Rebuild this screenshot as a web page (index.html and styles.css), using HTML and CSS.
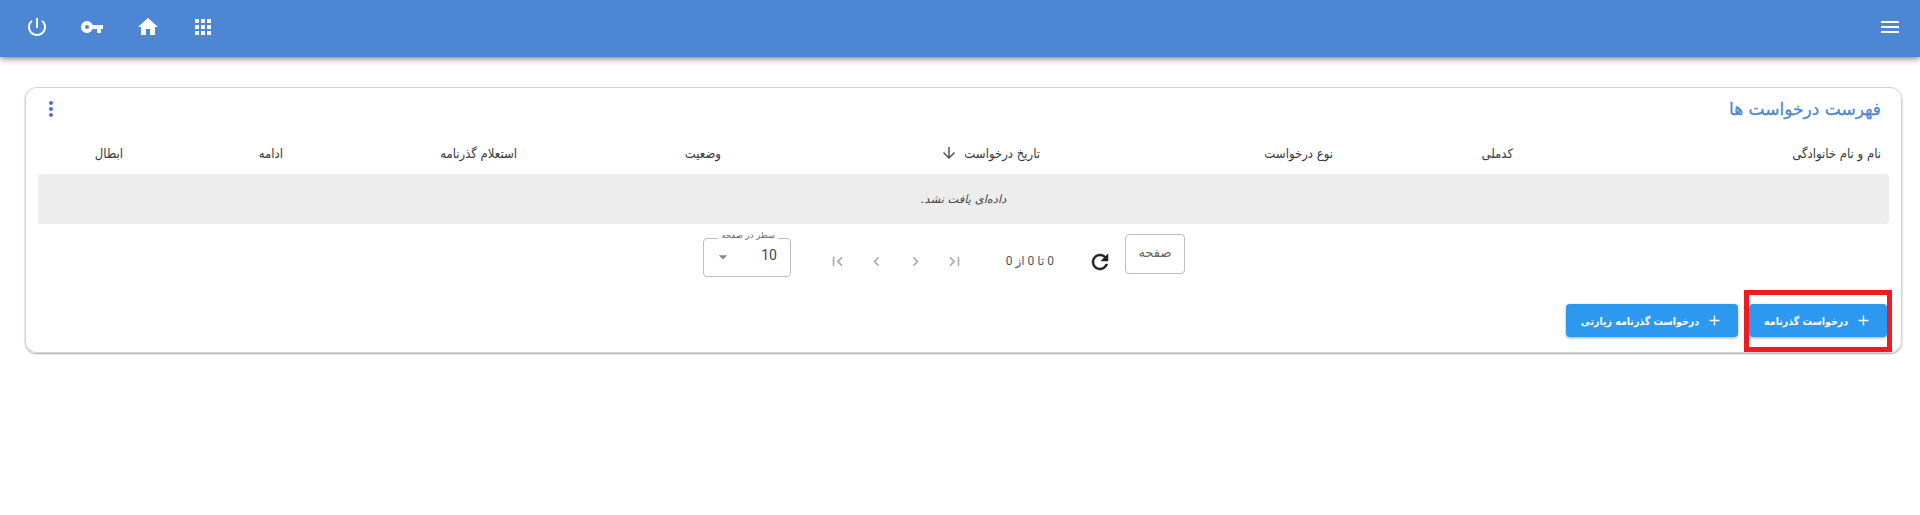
FILE: index.html
```html
<!DOCTYPE html>
<html lang="fa" dir="rtl">
<head>
<meta charset="utf-8">
<title>فهرست درخواست ها</title>
<link rel="stylesheet" href="styles.css">
</head>
<body>
<header class="topbar">
  <button class="icon-btn menu-btn"><svg viewBox="0 0 24 24" class="icon"><path d="M3 18h18v-2H3v2zm0-5h18v-2H3v2zm0-7v2h18V6H3z"/></svg></button>
  <nav class="top-actions">
    <button class="icon-btn"><svg viewBox="0 0 24 24" class="icon"><path d="M4 8h4V4H4v4zm6 12h4v-4h-4v4zm-6 0h4v-4H4v4zm0-6h4v-4H4v4zm6 0h4v-4h-4v4zm6-10v4h4V4h-4zm-6 4h4V4h-4v4zm6 6h4v-4h-4v4zm0 6h4v-4h-4v4z"/></svg></button>
    <button class="icon-btn"><svg viewBox="0 0 24 24" class="icon"><path d="M10 20v-6h4v6h5v-8h3L12 3 2 12h3v8z"/></svg></button>
    <button class="icon-btn"><svg viewBox="0 0 24 24" class="icon"><path d="M12.65 10C11.83 7.67 9.61 6 7 6c-3.31 0-6 2.69-6 6s2.69 6 6 6c2.61 0 4.83-1.67 5.65-4H17v4h4v-4h2v-4H12.65zM7 14c-1.1 0-2-.9-2-2s.9-2 2-2 2 .9 2 2-.9 2-2 2z"/></svg></button>
    <button class="icon-btn"><svg viewBox="0 0 24 24" class="icon"><path d="M13 3h-2v10h2V3zm4.83 2.17l-1.42 1.42C17.99 7.86 19 9.81 19 12c0 3.87-3.13 7-7 7s-7-3.13-7-7c0-2.19 1.01-4.14 2.58-5.42L6.17 5.17C4.23 6.82 3 9.26 3 12c0 4.97 4.03 9 9 9s9-4.03 9-9c0-2.74-1.23-5.18-3.17-6.83z"/></svg></button>
  </nav>
</header>

<main class="page">
  <section class="card">
    <div class="card-head">
      <h1 class="card-title">فهرست درخواست ها</h1>
      <button class="more-btn"><svg viewBox="0 0 24 24" class="icon"><path d="M12 8c1.1 0 2-.9 2-2s-.9-2-2-2-2 .9-2 2 .9 2 2 2zm0 2c-1.1 0-2 .9-2 2s.9 2 2 2 2-.9 2-2-.9-2-2-2zm0 6c-1.1 0-2 .9-2 2s.9 2 2 2 2-.9 2-2-.9-2-2-2z"/></svg></button>
    </div>

    <div class="table">
      <div class="thead">
        <span>نام و نام خانوادگی</span>
        <span>کدملی</span>
        <span>نوع درخواست</span>
        <span class="sorted">تاریخ درخواست <svg viewBox="0 0 24 24" class="sort-icon"><path d="M20 12l-1.41-1.41L13 16.17V4h-2v12.17l-5.58-5.59L4 12l8 8 8-8z"/></svg></span>
        <span>وضعیت</span>
        <span>استعلام گذرنامه</span>
        <span>ادامه</span>
        <span>ابطال</span>
      </div>
      <div class="empty">داده‌ای یافت نشد.</div>
    </div>

    <div class="pager">
      <button class="page-btn">صفحه</button>
      <svg viewBox="0 0 24 24" class="refresh"><path d="M17.65 6.35C16.2 4.9 14.21 4 12 4c-4.42 0-7.99 3.58-7.99 8s3.57 8 7.99 8c3.73 0 6.84-2.55 7.73-6h-2.08c-.82 2.33-3.04 4-5.65 4-3.31 0-6-2.69-6-6s2.69-6 6-6c1.66 0 3.14.69 4.22 1.78L13 11h7V4l-2.35 2.35z"/></svg>
      <span class="range">0 تا 0 از 0</span>
      <div class="nav-icons">
        <svg viewBox="0 0 24 24" class="nav-icon"><path d="M5.59 7.41L10.18 12l-4.59 4.59L7 18l6-6-6-6zM16 6h2v12h-2z"/></svg>
        <svg viewBox="0 0 24 24" class="nav-icon"><path d="M10 6L8.59 7.41 13.17 12l-4.58 4.59L10 18l6-6z"/></svg>
        <svg viewBox="0 0 24 24" class="nav-icon"><path d="M15.41 7.41L14 6l-6 6 6 6 1.41-1.41L10.83 12z"/></svg>
        <svg viewBox="0 0 24 24" class="nav-icon"><path d="M18.41 16.59L13.82 12l4.59-4.59L17 6l-6 6 6 6zM6 6h2v12H6z"/></svg>
      </div>
      <div class="select">
        <span class="select-label">سطر در صفحه</span>
        <span class="select-value">10</span>
        <svg viewBox="0 0 24 24" class="select-arrow"><path d="M7 10l5 5 5-5z"/></svg>
      </div>
    </div>

    <div class="actions">
      <div class="highlight">
        <button class="primary"><svg viewBox="0 0 24 24" class="plus"><path d="M19 13h-6v6h-2v-6H5v-2h6V5h2v6h6v2z"/></svg>درخواست گذرنامه</button>
      </div>
      <button class="primary"><svg viewBox="0 0 24 24" class="plus"><path d="M19 13h-6v6h-2v-6H5v-2h6V5h2v6h6v2z"/></svg>درخواست گذرنامه زیارتی</button>
    </div>
  </section>
</main>
</body>
</html>
```
FILE: styles.css
```css
* { box-sizing: border-box; }
html, body { margin: 0; height: 100%; background: #fff; overflow: hidden; }
body { font-family: "DejaVu Sans", "Noto Sans", sans-serif; color: rgba(0,0,0,.87); }
button { font: inherit; border: 0; background: none; padding: 0; }

.topbar {
  height: 57px;
  background: #4d87d3;
  display: flex;
  justify-content: space-between;
  align-items: center;
  padding: 0 2px 3px 9px;
  box-shadow: 0 2px 4px -1px rgba(0,0,0,.3), 0 4px 5px rgba(0,0,0,.14), 0 1px 10px rgba(0,0,0,.12);
}
.top-actions { display: flex; }
.icon-btn { width: 55.5px; height: 40px; display: flex; align-items: center; justify-content: center; color: #fff; }
.menu-btn { width: 56px; }
.icon { width: 24px; height: 24px; fill: currentColor; }

.page { padding: 30px 18px 0 25px; }
.card {
  height: 266px;
  border: 1px solid #d4d4d4;
  border-radius: 12px;
  box-shadow: 0 1px 2px rgba(0,0,0,.35);
  padding: 0 12px 0 12px;
}
.card-head { height: 42px; display: flex; justify-content: space-between; align-items: center; padding: 0 8px 0 0; }
.card-title { margin: 0; font-size: 17px; font-weight: 400; color: #4d87d3; -webkit-text-stroke: .3px #4d87d3; }
.more-btn { width: 24px; height: 24px; color: #4d72c9; margin-left: 1px; }

.thead {
  height: 44px;
  display: grid;
  grid-template-columns: 368px 180px 293px 319px 204px 234px 160px 93px;
  align-items: center;
  padding: 2px 8px 0 0;
  font-family: "DejaVu Sans Condensed", "DejaVu Sans", sans-serif;
  font-size: 13px;
  font-weight: 400;
  color: #3a3a3a;
}
.sorted { display: flex; align-items: center; gap: 6px; }
.sort-icon { width: 18px; height: 18px; fill: #555; }
.empty {
  height: 50px;
  background: #ededed;
  border-radius: 4px;
  display: flex;
  align-items: center;
  justify-content: center;
  font-size: 11.5px;
  font-style: italic;
  color: #444;
}

.pager { display: flex; align-items: center; height: 54px; padding-top: 6px; padding-right: 704px; }
.page-btn { width: 60px; height: 40px; border: 1px solid #bdbdbd; border-radius: 4px; font-size: 13px; color: #666; background: #fff; padding-bottom: 4px; }
.refresh { width: 24px; height: 24px; margin: 16px 13px 0 15px; fill: #222; stroke: #222; stroke-width: .5; }
.range { font-family: Roboto, "DejaVu Sans", sans-serif; font-size: 12px; color: #555; margin: 14px 19px 0 14px; white-space: nowrap; width: 50px; }
.nav-icons { display: flex; gap: 20px; margin: 14px 26px 0 37px; }
.nav-icon { width: 19px; height: 19px; fill: #a8a8a8; }

.select { position: relative; width: 88px; height: 39px; border: 1px solid #bdbdbd; border-radius: 4px; display: flex; align-items: center; justify-content: space-between; padding: 0 13px 0 9px; margin-top: 6px; }
.select-label { position: absolute; top: -9px; right: 12px; padding: 0 3px; background: #fff; font-size: 8.5px; line-height: 11px; color: #666; white-space: nowrap; }
.select-value { font-size: 14px; color: #444; font-family: Roboto, sans-serif; margin-bottom: 4px; }
.select-arrow { width: 20px; height: 20px; fill: #888; }

.actions { display: flex; gap: 11px; margin-top: 26px; padding-right: 2px; align-items: flex-start; }
.primary {
  height: 33px;
  padding: 0 15px;
  background: #2d98f0;
  color: #fff;
  border-radius: 4px;
  font-family: "DejaVu Sans Condensed", "DejaVu Sans", sans-serif;
  font-size: 10.5px;
  font-weight: 700;
  display: flex;
  align-items: center;
  gap: 7px;
  white-space: nowrap;
  box-shadow: 0 1px 3px rgba(0,0,0,.35);
}
.plus { width: 17px; height: 17px; fill: #fff; }
.highlight { position: relative; }
.highlight::after {
  content: "";
  position: absolute;
  inset: -14px -5px -15px -5px;
  border: 5px solid #ed1c24;
  pointer-events: none;
}
```
